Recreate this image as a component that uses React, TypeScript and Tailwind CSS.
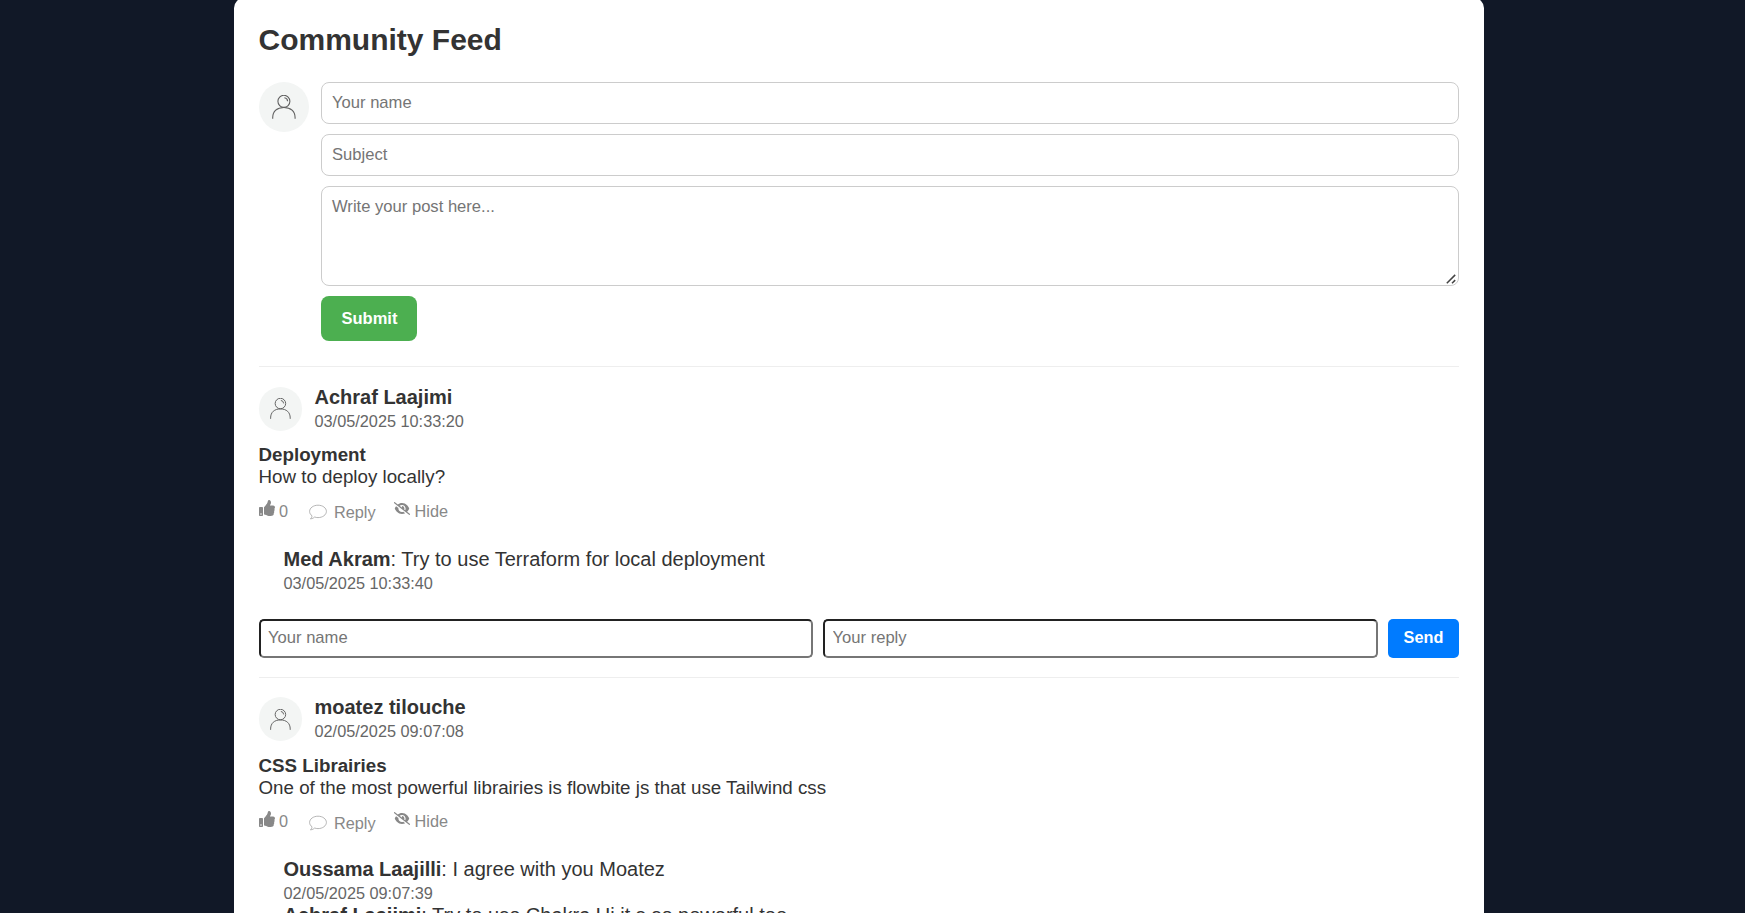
import { FaThumbsUp } from "react-icons/fa";
import { FaEyeSlash } from "react-icons/fa6";

function UserIcon({ className }: { className: string }) {
  return (
    <svg className={className} viewBox="0 0 24 24" fill="none" stroke="#606060" strokeWidth="1.1">
      <circle cx="11.900" cy="6.300" r="6" />
      <path d="M12.400 2.800q3 .3 3.200 3.400" />
      <path d="M.7 23.800v-1C.7 16.300 5 12.500 11.900 12.500S23.100 16.300 23.100 22.800v1" />
    </svg>
  );
}

function BubbleIcon() {
  return (
    <svg className="h-4 w-[18px]" viewBox="0 0 18 16" fill="none" stroke="#a3a3a3" strokeWidth=".8">
      <path d="M9 1.200c4.700 0 8.400 2.800 8.400 6.200s-3.700 6.200-8.400 6.200c-1.200 0-2.300-.2-3.300-.6-1 1-2.300 1.600-4.300 1.900 1-.9 1.600-2 1.600-3.100C1.500 10.700.6 9.200.6 7.400.6 4 4.300 1.200 9 1.200z" />
    </svg>
  );
}

function ResizeGrip() {
  return (
    <svg className="pointer-events-none absolute right-[3px] bottom-[2px] h-[10px] w-[10px]" viewBox="0 0 10 10" stroke="#444" strokeWidth="1.500">
      <path d="M.8 9.300L9.200.9M6 9.300l3.200-3.200" />
    </svg>
  );
}

type Reply = { author: string; text: string; date: string };
type Post = { author: string; date: string; subject: string; body: string; replies: Reply[] };

const posts: Post[] = [
  {
    author: "Achraf Laajimi",
    date: "03/05/2025 10:33:20",
    subject: "Deployment",
    body: "How to deploy locally?",
    replies: [{ author: "Med Akram", text: "Try to use Terraform for local deployment", date: "03/05/2025 10:33:40" }],
  },
  {
    author: "moatez tilouche",
    date: "02/05/2025 09:07:08",
    subject: "CSS Librairies",
    body: "One of the most powerful librairies is flowbite js that use Tailwind css",
    replies: [
      { author: "Oussama Laajilli", text: "I agree with you Moatez", date: "02/05/2025 09:07:39" },
      { author: "Achraf Laajimi", text: "Try to use Chakra Ui it s so powerful too", date: "02/05/2025 09:08:12" },
    ],
  },
];

const field = "block w-full rounded-lg border border-[#ccc] bg-white px-[10.500px] text-[16.600px] text-[#333] placeholder:text-[#757575]";
const replyField =
  "h-[39px] min-w-0 flex-1 rounded-[5px] border-2 border-t-[#222] border-r-[#767676] border-b-[#767676] border-l-[#222] bg-white px-[7.500px] pb-px text-[16.600px] placeholder:text-[#757575]";

function PostItem({ post }: { post: Post }) {
  return (
    <article className="border-t border-[#eee] pt-[19.900px] pb-[18.650px]">
      <header className="flex h-11 gap-[13px]">
        <div className="flex h-11 w-[43px] items-center justify-center rounded-full bg-[#f3f5f4]">
          <UserIcon className="h-[21px] w-[21px]" />
        </div>
        <div>
          <h2 className="h-[22px] text-[20px] leading-[21px] font-bold">{post.author}</h2>
          <p className="text-[16.300px] leading-6 text-[#666]">{post.date}</p>
        </div>
      </header>
      <div className="mt-[13.100px] text-[18.750px] leading-[22px]">
        <h3 className="font-bold">{post.subject}</h3>
        <p>{post.body}</p>
      </div>
      <div className="mt-[10.900px] flex h-6 pl-[.4px] text-[16.300px] leading-6 text-[#888]">
        <button className="flex gap-1"><FaThumbsUp className="mt-[1.500px] h-4 w-4" />0</button>
        <button className="mt-[3px] ml-[21px] flex items-center gap-[7px]"><BubbleIcon />Reply</button>
        <button className="ml-[18.500px] flex gap-[4.500px]"><FaEyeSlash className="mt-[3px] h-[13px] w-4" />Hide</button>
      </div>
      <div className="mt-6 ml-[25px]">
        {post.replies.map((r) => (
          <div key={r.date} className="h-[46px]">
            <p className="text-[20px] leading-6"><b>{r.author}</b>: {r.text}</p>
            <p className="text-[16.300px] leading-6 text-[#666]">{r.date}</p>
          </div>
        ))}
      </div>
      <form className="mt-[26px] flex gap-2.5">
        <input className={replyField} placeholder="Your name" />
        <input className={replyField} placeholder="Your reply" />
        <button type="button" className="h-[39px] w-[71px] rounded-[5px] bg-[#007bff] pb-0.5 pl-px text-[16.300px] font-bold text-white">Send</button>
      </form>
    </article>
  );
}

export default function App() {
  return (
    <div className="h-[913px] overflow-hidden bg-[#111827] pl-[233.500px] font-['Liberation_Sans',Arial,sans-serif] text-[#333]">
      <main className="-mt-0.5 w-[1250px] rounded-[10px] bg-white px-[25px] pt-[25px]">
        <h1 className="text-[30px] leading-[34px] font-bold">Community Feed</h1>
        <form className="mt-[25px] mb-[25px] flex gap-3">
          <div className="flex h-[50px] w-[50px] shrink-0 items-center justify-center rounded-full bg-[#f3f5f4]">
            <UserIcon className="h-6 w-6" />
          </div>
          <div className="flex flex-1 flex-col gap-2.5">
            <input className={`${field} h-[42px] pb-px`} placeholder="Your name" />
            <input className={`${field} h-[42px] pb-px`} placeholder="Subject" />
            <div className="relative">
              <textarea className={`${field} h-[100px] resize-none py-[9.600px] leading-5`} placeholder="Write your post here..." />
              <ResizeGrip />
            </div>
            <button type="button" className="h-[45px] w-24 rounded-lg bg-[#4caf50] pl-0.5 text-[16.500px] font-bold text-white">Submit</button>
          </div>
        </form>
        {posts.map((p) => <PostItem key={p.author} post={p} />)}
      </main>
    </div>
  );
}
